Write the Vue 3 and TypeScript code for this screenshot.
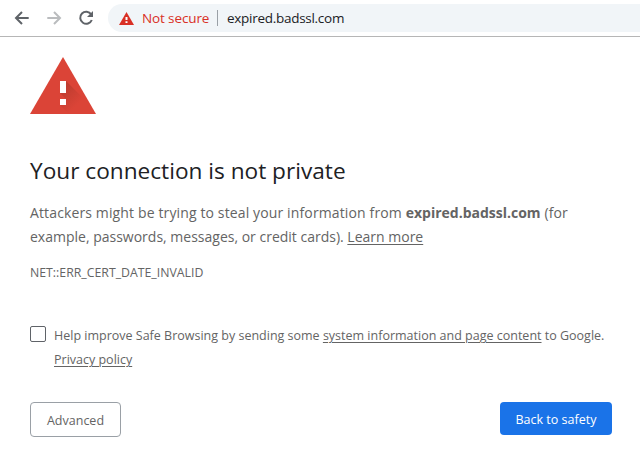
<script setup lang="ts">
import { ref } from 'vue'

const host = 'expired.badssl.com'
const reporting = ref(false)
</script>

<template>
  <div class="window">
    <header class="toolbar">
      <svg class="nav" viewBox="0 0 16 16"><path d="M14.7 8H2.5M8 2 2 8l6 6" /></svg>
      <svg class="nav disabled" viewBox="0 0 16 16"><path d="M1.3 8h12.2M8 2l6 6-6 6" /></svg>
      <svg class="nav reload" viewBox="0 0 16 16">
        <path d="M13.2 4.4A6 6 0 1 0 13.8 10" />
        <path class="tip" d="M15 1v6H9z" />
      </svg>
      <div class="omnibox">
        <svg class="badge" viewBox="0 0 15 13">
          <path fill="#d93025" d="M7.5 0 15 13H0z" />
          <path fill="#fff" d="M6.5 5h2v3h-2zM6.5 9.2h2v1.8h-2z" />
        </svg>
        <span class="status">Not secure</span>
        <span class="divider"></span>
        <span class="url">{{ host }}</span>
      </div>
    </header>

    <main class="page">
      <svg class="warning" viewBox="0 0 66 57">
        <defs>
          <linearGradient id="shade" gradientUnits="userSpaceOnUse" x1="33" y1="30" x2="49" y2="46">
            <stop offset="0" stop-color="#bd3c2f" />
            <stop offset="1" stop-color="#db4437" />
          </linearGradient>
        </defs>
        <path fill="#db4437" d="M33 0 66 57H0z" />
        <path fill="url(#shade)" d="M36 24 56 44v13H39L30 48l6-6-6-6z" />
        <path fill="#fff" d="M30 24h6v12h-6zM30 42h6v6h-6z" />
      </svg>
      <h1>Your connection is not private</h1>
      <p class="message">
        <span class="line first">Attackers might be trying to steal your information from <strong>{{ host }}</strong> (for</span>
        <span class="line second">example, passwords, messages, or credit cards). <a>Learn more</a></span>
      </p>
      <div class="code">NET::ERR_CERT_DATE_INVALID</div>
      <label class="optin">
        <input v-model="reporting" type="checkbox" class="check" />
        <span>
          <span class="line">Help improve Safe Browsing by sending some <a>system information and page content</a> to Google.</span>
          <span class="line"><a>Privacy policy</a></span>
        </span>
      </label>
      <div class="actions">
        <button class="secondary">Advanced</button>
        <button class="primary">Back to safety</button>
      </div>
    </main>
  </div>
</template>

<style>
body {
  background: #fff;
}
</style>

<style scoped>
.window {
  height: 468px;
  overflow: hidden;
  font-family: "Open Sans", "Noto Sans", sans-serif;
  color: #646464;
}
.toolbar {
  display: flex;
  align-items: center;
  box-sizing: border-box;
  height: 37px;
  padding-left: 14px;
  border-bottom: 1px solid #b6b6b6;
}
.nav {
  width: 16px;
  height: 16px;
  margin-right: 16px;
  fill: none;
  stroke: #5f6368;
  stroke-width: 2;
}
.nav.disabled {
  stroke: #babcbe;
}
.nav.reload {
  margin-right: 14px;
}
.nav .tip {
  fill: #5f6368;
  stroke: none;
}
.omnibox {
  display: flex;
  align-items: center;
  flex: 1;
  height: 28px;
  padding-left: 11px;
  border-radius: 14px 0 0 14px;
  background: #f1f5f8;
  font-size: 13.5px;
  white-space: nowrap;
}
.badge {
  width: 15px;
  height: 13px;
}
.status {
  width: 75px;
  margin-left: 8px;
  color: #d93025;
  letter-spacing: -0.12px;
}
.divider {
  width: 1px;
  height: 16px;
  background: #9aa0a6;
}
.url {
  margin-left: 9px;
  color: #202124;
  letter-spacing: -0.28px;
}
.page {
  padding: 20px 28px 0 30px;
}
.warning {
  display: block;
  width: 66px;
  height: 57px;
}
h1 {
  margin: 40px 0 0;
  font-size: 22.65px;
  font-weight: 400;
  line-height: 34px;
  color: #202124;
  white-space: nowrap;
}
.message {
  margin: 13px 0 0;
  font-size: 14px;
  line-height: 24px;
}
.line {
  display: block;
  white-space: nowrap;
}
.first {
  letter-spacing: 0.13px;
}
strong {
  letter-spacing: 0;
}
a {
  text-decoration: underline;
  text-underline-offset: 2px;
  text-decoration-thickness: 1px;
}
.code {
  margin-top: 14px;
  font-size: 12.3px;
  line-height: 20px;
}
.optin {
  display: flex;
  margin-top: 41px;
  font-size: 12.5px;
  line-height: 24px;
}
.check {
  appearance: none;
  box-sizing: border-box;
  width: 16px;
  height: 16px;
  margin: 2px 8px 0 0;
  border: 1px solid #5f6368;
  border-radius: 2px;
}
.actions {
  display: flex;
  justify-content: space-between;
  align-items: flex-start;
  margin-top: 30px;
}
button {
  box-sizing: border-box;
  padding: 2px 0 0;
  border: 0;
  border-radius: 4px;
  font-family: inherit;
  font-size: 12.5px;
}
.secondary {
  width: 91px;
  height: 35px;
  border: 1px solid #9aa0a6;
  background: #fff;
  color: #646464;
}
.primary {
  width: 112px;
  height: 33px;
  background: #1a73e8;
  color: #fff;
}
</style>
